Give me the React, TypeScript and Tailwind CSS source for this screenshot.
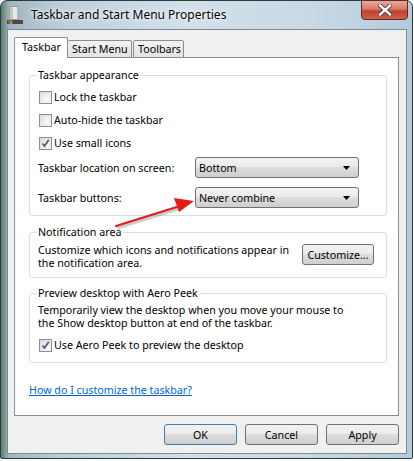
import React from "react";

const font = { fontFamily: '"Noto Sans", "Open Sans", sans-serif' };

const CheckBox = ({ checked }: { checked?: boolean }) => (
    <div className="w-[13px] h-[13px] border border-[#8f8f8f] bg-[linear-gradient(135deg,#dcdcdc,#f7f7f7)] p-[2px] ml-[1px] shrink-0">
        <div className="w-full h-full bg-[linear-gradient(135deg,#e4e4e4,#ffffff)] relative">
            {checked && (
                <svg width="11" height="11" viewBox="0 0 11 11" className="absolute left-[-2px] top-[-2px]">
                    <path d="M2.5 5.5 L4.5 8 L8.8 1.8" stroke="#4a5f86" strokeWidth="1.8" fill="none" />
                </svg>
            )}
        </div>
    </div>
);

const CheckRow = ({ label, checked }: { label: string; checked?: boolean }) => (
    <div className="flex items-center h-[16px] gap-[2px]">
        <CheckBox checked={checked} />
        <span className="leading-[14px]">{label}</span>
    </div>
);

const Combo = ({ value }: { value: string }) => (
    <div className="w-[164px] h-[21px] rounded-[3px] border border-[#707070] bg-[linear-gradient(180deg,#f2f2f2_0%,#ebebeb_45%,#dddddd_50%,#cfcfcf_100%)] flex items-center pl-[3px] pr-[8px]">
        <span className="leading-[14px]">{value}</span>
        <svg width="7" height="4" viewBox="0 0 7 4" className="ml-auto">
            <path d="M0 0 H7 L3.5 4 Z" fill="#000" />
        </svg>
    </div>
);

const WinButton = ({ label, def, w = "w-[73px]" }: { label: string; def?: boolean; w?: string }) => (
    <div
        className={`${w} h-[21px] rounded-[3px] border ${def ? "border-[#3c7fb1]" : "border-[#707070]"} bg-[linear-gradient(180deg,#f2f2f2_0%,#ebebeb_45%,#dddddd_50%,#cfcfcf_100%)] flex items-center justify-center leading-[14px]`}
    >
        {label}
    </div>
);

const Group = ({ title, className, children }: { title: string; className?: string; children: React.ReactNode }) => (
    <fieldset className={`ml-[14px] w-[358px] border border-[#d5dfe5] rounded-[3px] px-[8px] ${className ?? ""}`}>
        <legend className="ml-[-2px] px-[2px] leading-[14px]">{title}</legend>
        {children}
    </fieldset>
);

const TitleIcon = () => (
    <svg width="16" height="19" viewBox="0 0 16 19">
        <rect x="3" y="0.5" width="8" height="13" fill="#e8e8e8" stroke="#9a9a9a" />
        <rect x="4" y="1.5" width="2" height="11" fill="#c8c8c8" />
        <rect x="0" y="14" width="16" height="4" fill="#4a4a4a" />
        <rect x="1" y="14.5" width="2" height="1.5" fill="#e24a2a" />
        <rect x="3.2" y="14.5" width="2" height="1.5" fill="#6cb83a" />
        <rect x="1" y="16.2" width="2" height="1.5" fill="#2a7ad8" />
        <rect x="3.2" y="16.2" width="2" height="1.5" fill="#f2c21a" />
    </svg>
);

export default function App() {
    return (
        <div className="w-[414px] h-[461px] bg-white relative overflow-hidden text-[10.7px] text-black" style={font}>
            <div className="w-[413px] h-[459px] rounded-t-[7px] rounded-b-[2px] border border-[#2d3b3a] bg-[linear-gradient(90deg,#5f7d70_0%,#9fb6bf_2%,#bccfdc_15%,#d3e0ea_45%,#c9d9e5_75%,#b4cbdc_100%)] flex flex-col">
                {/* title bar */}
                <div className="h-[28px] flex items-start">
                    <div className="ml-[6px] mt-[5px]">
                        <TitleIcon />
                    </div>
                    <span className="ml-[8px] mt-[6px] text-[12px] leading-[16px] text-black [text-shadow:0_0_6px_#ffffff,0_0_3px_#ffffff]">
                        Taskbar and Start Menu Properties
                    </span>
                    <div className="ml-auto mr-[4px] mt-[-1px] w-[47px] h-[20px] rounded-b-[4px] border border-[#5b2b24] bg-[linear-gradient(180deg,#e9a99a_0%,#d77a68_45%,#c2402f_55%,#d0604c_100%)] flex items-center justify-center">
                        <svg width="14" height="12" viewBox="0 0 14 12">
                            <path d="M2 1.5 L12 10.5 M12 1.5 L2 10.5" stroke="#3d3d3d" strokeWidth="4.2" strokeLinecap="square" />
                            <path d="M2 1.5 L12 10.5 M12 1.5 L2 10.5" stroke="#ffffff" strokeWidth="2.4" strokeLinecap="square" />
                        </svg>
                    </div>
                </div>

                {/* client */}
                <div className="ml-[6px] w-[400px] h-[425px] border border-[#7d8a94] bg-[#f0f0f0] flex flex-col">
                    {/* tabs */}
                    <div className="flex items-end pt-[7px] ml-[6px] relative z-10 mb-[-1px]">
                        <div className="h-[21px] w-[54px] bg-white border border-b-0 border-[#898c95] rounded-t-[2px] pl-[7px] pt-[2px] leading-[14px]">
                            Taskbar
                        </div>
                        <div className="h-[18px] w-[64px] border border-l-0 border-[#898c95] rounded-t-[2px] bg-[linear-gradient(180deg,#f2f2f2,#e3e3e3)] pl-[4px] pt-[1px] leading-[14px]">
                            Start Menu
                        </div>
                        <div className="h-[18px] w-[51px] ml-[1px] border border-[#898c95] rounded-t-[2px] bg-[linear-gradient(180deg,#f2f2f2,#e3e3e3)] pl-[4px] pt-[1px] leading-[14px]">
                            Toolbars
                        </div>
                    </div>

                    {/* panel */}
                    <div className="ml-[6px] w-[385px] h-[359px] bg-white border border-[#898c95] flex flex-col">
                        <Group title="Taskbar appearance" className="mt-[10px] pt-[7px] pb-[7px]">
                            <div className="flex flex-col gap-[7px]">
                                <CheckRow label="Lock the taskbar" />
                                <CheckRow label="Auto-hide the taskbar" />
                                <CheckRow label="Use small icons" checked />
                            </div>
                            <div className="flex items-center mt-[6px]">
                                <span className="w-[157px] leading-[14px]">Taskbar location on screen:</span>
                                <Combo value="Bottom" />
                            </div>
                            <div className="flex items-center mt-[9px]">
                                <span className="w-[157px] leading-[14px]">Taskbar buttons:</span>
                                <Combo value="Never combine" />
                            </div>
                        </Group>

                        <Group title="Notification area" className="mt-[9px] pt-[5px] pb-[7px]">
                            <div className="flex items-start">
                                <p className="w-[262px] leading-[13px]">
                                    Customize which icons and notifications appear in the notification area.
                                </p>
                                <div className="ml-auto mr-[4px]">
                                    <WinButton label="Customize..." w="w-[72px]" />
                                </div>
                            </div>
                        </Group>

                        <Group title="Preview desktop with Aero Peek" className="mt-[8px] pt-[4px] pb-[9px]">
                            <p className="leading-[13px] w-[320px]">
                                Temporarily view the desktop when you move your mouse to the Show desktop button at end of the taskbar.
                            </p>
                            <div className="mt-[7px]">
                                <CheckRow label="Use Aero Peek to preview the desktop" checked />
                            </div>
                        </Group>

                        <a className="ml-[14px] mt-[20px] leading-[14px] text-[#0066cc] underline self-start">
                            How do I customize the taskbar?
                        </a>
                    </div>

                    {/* buttons */}
                    <div className="flex justify-end gap-[8px] mt-[8px] mr-[7px]">
                        <WinButton label="OK" def />
                        <WinButton label="Cancel" />
                        <WinButton label="Apply" />
                    </div>
                </div>
            </div>

            {/* red arrow annotation */}
            <svg width="414" height="461" className="absolute left-0 top-0 pointer-events-none">
                <line x1="116" y1="226" x2="180" y2="206" stroke="#9a9a9a" strokeOpacity="0.5" strokeWidth="3" transform="translate(1,2)" />
                <line x1="116" y1="226" x2="180" y2="206" stroke="#e41b1b" strokeWidth="2.2" strokeLinecap="round" />
                <path d="M194 201 L174 198 L179 212 Z" fill="#e41b1b" />
            </svg>
        </div>
    );
}
